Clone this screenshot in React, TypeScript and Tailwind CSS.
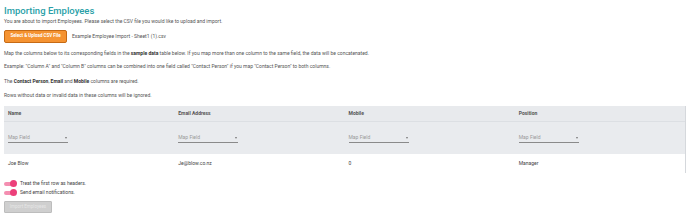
import React from 'react';

const columns = [
  { label: 'Name', value: 'Joe Blow' },
  { label: 'Email Address', value: 'Je@blow.co.nz' },
  { label: 'Mobile', value: '0' },
  { label: 'Position', value: 'Manager' },
];

const Toggle: React.FC<{ label: string }> = ({ label }) => (
  <div className="flex items-center gap-[3px] h-[9px]">
    <div className="relative w-[13px] h-[7px]">
      <div className="absolute left-0 top-[1.5px] w-[11px] h-[4px] rounded-full bg-[#f48fb1]" />
      <div className="absolute right-0 top-0 w-[7px] h-[7px] rounded-full bg-[#ec407a]" />
    </div>
    <span className="text-[5px] leading-[9px] text-[#444]">{label}</span>
  </div>
);

export default function App() {
  return (
    <div
      className="w-[688px] h-[219px] bg-white px-[4px] pt-[4px] text-[#555] overflow-hidden"
      style={{ fontFamily: 'Roboto, "Open Sans", sans-serif' }}
    >
      <h1 className="text-[9.5px] leading-[13px] text-[#2a9fa8] font-medium">Importing Employees</h1>
      <p className="text-[5px] leading-[7px] mt-[1px]">
        You are about to import Employees. Please select the CSV file you would like to upload and import.
      </p>

      <div className="flex items-center gap-[5px] mt-[5px]">
        <button className="w-[63px] h-[13px] rounded-[2px] bg-[#f59331] border border-[#c66a14] text-white text-[4.5px] font-bold">
          Select &amp; Upload CSV File
        </button>
        <span className="text-[5px]">Example Employee Import - Sheet1 (1).csv</span>
      </div>

      <p className="text-[5px] leading-[7px] mt-[7px]">
        Map the columns below to its corresponding fields in the <b className="text-[#333]">sample data</b> table below. If you map more than one column to the same field, the data will be concatenated.
      </p>
      <p className="text-[5px] leading-[7px] mt-[6px]">
        Example: "Column A" and "Column B" columns can be combined into one field called "Contact Person" if you map "Contact Person" to both columns.
      </p>
      <p className="text-[5px] leading-[7px] mt-[8px]">
        The <b className="text-[#333]">Contact Person</b>, <b className="text-[#333]">Email</b> and <b className="text-[#333]">Mobile</b> columns are required.
      </p>
      <p className="text-[5px] leading-[7px] mt-[7px]">Rows without data or invalid data in these columns will be ignored.</p>

      <div className="mt-[7px] w-[682px] border-r border-[#d5d8dc]">
        <div className="grid grid-cols-4 bg-[#e8eaed] h-[16px] items-center border-b border-[#dcdfe3]">
          {columns.map((c) => (
            <div key={c.label} className="px-[4px] text-[5px] font-bold text-[#555]">{c.label}</div>
          ))}
        </div>
        <div className="grid grid-cols-4 bg-[#e9ebee] h-[32px] items-center">
          {columns.map((c) => (
            <div key={c.label} className="px-[4px]">
              <div className="w-[60px] h-[9px] flex items-center justify-between border-b border-[#8a8a8a] pr-[1px]">
                <span className="text-[5px] text-[#9a9a9a]">Map Field</span>
                <span className="w-0 h-0 border-l-[1.5px] border-r-[1.5px] border-t-[2px] border-l-transparent border-r-transparent border-t-[#777]" />
              </div>
            </div>
          ))}
        </div>
        <div className="grid grid-cols-4 h-[19px] items-center">
          {columns.map((c) => (
            <div key={c.label} className="px-[4px] text-[5px] text-[#444]">{c.value}</div>
          ))}
        </div>
      </div>

      <div className="mt-[6px] flex flex-col">
        <Toggle label="Treat the first row as headers." />
        <Toggle label="Send email notifications." />
      </div>

      <button className="block mt-[4px] w-[48px] h-[12px] bg-[#cfcfcf] border border-[#bdbdbd] rounded-[1px] text-[4.5px] leading-[10px] text-[#e6e6e6]">
        Import Employees
      </button>
    </div>
  );
}
